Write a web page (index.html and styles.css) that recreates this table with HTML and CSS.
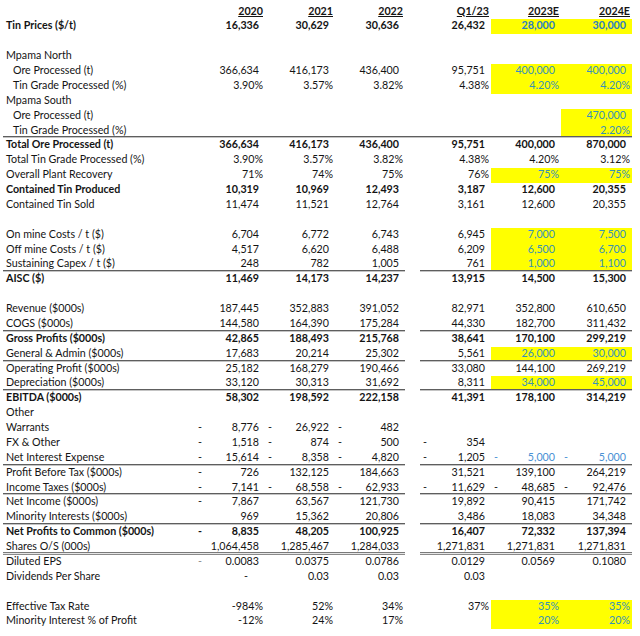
FILE: index.html
```html
<!DOCTYPE html>
<html>
<head>
<meta charset="utf-8">
<link rel="stylesheet" href="styles.css">
</head>
<body>
<div class="sheet">
  <div class="r hd"><div class="l"></div><div><u>2020</u></div><div><u>2021</u></div><div><u>2022</u></div><div class="s"></div><div><u>Q1/23</u></div><div><u>2023E</u></div><div><u>2024E</u></div></div>
  <div class="r b"><div class="l">Tin Prices ($/t)</div><div>16,336</div><div>30,629</div><div>30,636</div><div class="s"></div><div>26,432</div><div class="y in">28,000</div><div class="y in">30,000</div></div>
  <div class="r"><div class="l"></div><div></div><div></div><div></div><div class="s"></div><div></div><div></div><div></div></div>
  <div class="r"><div class="l">Mpama North</div><div></div><div></div><div></div><div class="s"></div><div></div><div></div><div></div></div>
  <div class="r"><div class="l i">Ore Processed (t)</div><div>366,634</div><div>416,173</div><div>436,400</div><div class="s"></div><div>95,751</div><div class="y in">400,000</div><div class="y in">400,000</div></div>
  <div class="r"><div class="l i">Tin Grade Processed (%)</div><div class="p">3.90%</div><div class="p">3.57%</div><div class="p">3.82%</div><div class="s"></div><div class="p">4.38%</div><div class="y in p">4.20%</div><div class="y in p">4.20%</div></div>
  <div class="r"><div class="l">Mpama South</div><div></div><div></div><div></div><div class="s"></div><div></div><div></div><div></div></div>
  <div class="r"><div class="l i">Ore Processed (t)</div><div></div><div></div><div></div><div class="s"></div><div></div><div></div><div class="y in">470,000</div></div>
  <div class="r bf"><div class="l i">Tin Grade Processed (%)</div><div></div><div></div><div></div><div class="s"></div><div></div><div></div><div class="y in p">2.20%</div></div>
  <div class="r b"><div class="l">Total Ore Processed (t)</div><div>366,634</div><div>416,173</div><div>436,400</div><div class="s"></div><div>95,751</div><div>400,000</div><div>870,000</div></div>
  <div class="r"><div class="l">Total Tin Grade Processed (%)</div><div class="p">3.90%</div><div class="p">3.57%</div><div class="p">3.82%</div><div class="s"></div><div class="p">4.38%</div><div class="p">4.20%</div><div class="p">3.12%</div></div>
  <div class="r"><div class="l">Overall Plant Recovery</div><div class="p">71%</div><div class="p">74%</div><div class="p">75%</div><div class="s"></div><div class="p">76%</div><div class="y in p">75%</div><div class="y in p">75%</div></div>
  <div class="r b"><div class="l">Contained Tin Produced</div><div>10,319</div><div>10,969</div><div>12,493</div><div class="s"></div><div>3,187</div><div>12,600</div><div>20,355</div></div>
  <div class="r"><div class="l">Contained Tin Sold</div><div>11,474</div><div>11,521</div><div>12,764</div><div class="s"></div><div>3,161</div><div>12,600</div><div>20,355</div></div>
  <div class="r"><div class="l"></div><div></div><div></div><div></div><div class="s"></div><div></div><div></div><div></div></div>
  <div class="r"><div class="l">On mine Costs / t ($)</div><div>6,704</div><div>6,772</div><div>6,743</div><div class="s"></div><div>6,945</div><div class="y in">7,000</div><div class="y in">7,500</div></div>
  <div class="r"><div class="l">Off mine Costs / t ($)</div><div>4,517</div><div>6,620</div><div>6,488</div><div class="s"></div><div>6,209</div><div class="y in">6,500</div><div class="y in">6,700</div></div>
  <div class="r bl"><div class="l">Sustaining Capex / t ($)</div><div>248</div><div>782</div><div>1,005</div><div class="s"></div><div>761</div><div class="y in">1,000</div><div class="y in">1,100</div></div>
  <div class="r b"><div class="l">AISC ($)</div><div>11,469</div><div>14,173</div><div>14,237</div><div class="s"></div><div>13,915</div><div>14,500</div><div>15,300</div></div>
  <div class="r"><div class="l"></div><div></div><div></div><div></div><div class="s"></div><div></div><div></div><div></div></div>
  <div class="r"><div class="l">Revenue ($000s)</div><div>187,445</div><div>352,883</div><div>391,052</div><div class="s"></div><div>82,971</div><div>352,800</div><div>610,650</div></div>
  <div class="r bl"><div class="l">COGS ($000s)</div><div>144,580</div><div>164,390</div><div>175,284</div><div class="s"></div><div>44,330</div><div>182,700</div><div>311,432</div></div>
  <div class="r b"><div class="l">Gross Profits ($000s)</div><div>42,865</div><div>188,493</div><div>215,768</div><div class="s"></div><div>38,641</div><div>170,100</div><div>299,219</div></div>
  <div class="r bl"><div class="l">General &amp; Admin ($000s)</div><div>17,683</div><div>20,214</div><div>25,302</div><div class="s"></div><div>5,561</div><div class="y in">26,000</div><div class="y in">30,000</div></div>
  <div class="r"><div class="l">Operating Profit ($000s)</div><div>25,182</div><div>168,279</div><div>190,466</div><div class="s"></div><div>33,080</div><div>144,100</div><div>269,219</div></div>
  <div class="r bl"><div class="l">Depreciation ($000s)</div><div>33,120</div><div>30,313</div><div>31,692</div><div class="s"></div><div>8,311</div><div class="y in">34,000</div><div class="y in">45,000</div></div>
  <div class="r b"><div class="l">EBITDA ($000s)</div><div>58,302</div><div>198,592</div><div>222,158</div><div class="s"></div><div>41,391</div><div>178,100</div><div>314,219</div></div>
  <div class="r"><div class="l">Other</div><div></div><div></div><div></div><div class="s"></div><div></div><div></div><div></div></div>
  <div class="r"><div class="l">Warrants</div><div class="ng"><span>-</span><span>8,776</span></div><div class="ng"><span>-</span><span>26,922</span></div><div class="ng"><span>-</span><span>482</span></div><div class="s"></div><div></div><div></div><div></div></div>
  <div class="r"><div class="l">FX &amp; Other</div><div class="ng"><span>-</span><span>1,518</span></div><div class="ng"><span>-</span><span>874</span></div><div class="ng"><span>-</span><span>500</span></div><div class="s"></div><div class="ng"><span>-</span><span>354</span></div><div></div><div></div></div>
  <div class="r bl"><div class="l">Net Interest Expense</div><div class="ng"><span>-</span><span>15,614</span></div><div class="ng"><span>-</span><span>8,358</span></div><div class="ng"><span>-</span><span>4,820</span></div><div class="s"></div><div class="ng"><span>-</span><span>1,205</span></div><div class="ng bi"><span>-</span><span>5,000</span></div><div class="ng bi"><span>-</span><span>5,000</span></div></div>
  <div class="r"><div class="l">Profit Before Tax ($000s)</div><div class="ng"><span>-</span><span>726</span></div><div>132,125</div><div>184,663</div><div class="s"></div><div>31,521</div><div>139,100</div><div>264,219</div></div>
  <div class="r bl"><div class="l">Income Taxes ($000s)</div><div class="ng"><span>-</span><span>7,141</span></div><div class="ng"><span>-</span><span>68,558</span></div><div class="ng"><span>-</span><span>62,933</span></div><div class="s"></div><div class="ng"><span>-</span><span>11,629</span></div><div class="ng"><span>-</span><span>48,685</span></div><div class="ng"><span>-</span><span>92,476</span></div></div>
  <div class="r"><div class="l">Net Income ($000s)</div><div class="ng"><span>-</span><span>7,867</span></div><div>63,567</div><div>121,730</div><div class="s"></div><div>19,892</div><div>90,415</div><div>171,742</div></div>
  <div class="r bl"><div class="l">Minority Interests ($000s)</div><div>969</div><div>15,362</div><div>20,806</div><div class="s"></div><div>3,486</div><div>18,083</div><div>34,348</div></div>
  <div class="r b"><div class="l">Net Profits to Common ($000s)</div><div class="ng"><span>-</span><span>8,835</span></div><div>48,205</div><div>100,925</div><div class="s"></div><div>16,407</div><div>72,332</div><div>137,394</div></div>
  <div class="r dbl"><div class="l">Shares O/S (000s)</div><div>1,064,458</div><div>1,285,467</div><div>1,284,033</div><div class="s"></div><div>1,271,831</div><div>1,271,831</div><div>1,271,831</div></div>
  <div class="r"><div class="l">Diluted EPS</div><div class="ng"><span class="lt">-</span><span>0.0083</span></div><div>0.0375</div><div>0.0786</div><div class="s"></div><div>0.0129</div><div>0.0569</div><div>0.1080</div></div>
  <div class="r"><div class="l">Dividends Per Share</div><div class="z">-</div><div>0.03</div><div>0.03</div><div class="s"></div><div>0.03</div><div></div><div></div></div>
  <div class="r"><div class="l"></div><div></div><div></div><div></div><div class="s"></div><div></div><div></div><div></div></div>
  <div class="r"><div class="l">Effective Tax Rate</div><div class="p">-984%</div><div class="p">52%</div><div class="p">34%</div><div class="s"></div><div class="p">37%</div><div class="y in p">35%</div><div class="y in p">35%</div></div>
  <div class="r"><div class="l">Minority Interest % of Profit</div><div class="p">-12%</div><div class="p">24%</div><div class="p">17%</div><div class="s"></div><div></div><div class="y in p">20%</div><div class="y in p">20%</div></div>
</div>
</body>
</html>
```
FILE: styles.css
```css
body {
  margin: 0;
  background: #ffffff;
  font-family: Lato, "Liberation Sans", sans-serif;
  font-size: 10.7px;
  color: #141414;
}

.sheet {
  padding: 4.6px 0 0 3px;
  width: 629px;
}

.r {
  display: grid;
  grid-template-columns: 192px 70px 70px 70px 15px 71px 70px 71px;
  height: 14.88px;
  line-height: 12.8px;
}

.r > div {
  white-space: nowrap;
  text-align: right;
  padding-right: 6px;
  box-sizing: border-box;
}

.r > .l {
  text-align: left;
  padding-left: 3px;
  padding-right: 0;
}

.r > .i {
  padding-left: 10px;
}

.r > .p,
.hd > div {
  padding-right: 2px;
}

.hd {
  font-weight: bold;
}

.b {
  font-weight: bold;
}

.r > .ng {
  display: flex;
  justify-content: space-between;
  padding-left: 3px;
}

.lt {
  color: #8a8a8a;
}

.r > .z {
  padding-right: 17px;
}

.y {
  background: #ffff00;
}

.in {
  color: #3791b8;
}

.b .in {
  color: #2f7fbf;
}

.bi {
  color: #4a90d4;
}

.bl > div:not(.s),
.bf > div {
  box-shadow: inset 0 -1px 0 #c4c4c4, inset 0 -2px 0 #5e5e5e;
}

.dbl > div:not(.s) {
  box-shadow: inset 0 -1px 0 #8a8a8a, inset 0 -2px 0 #e6e6e6, inset 0 -3px 0 #7a7a7a;
}
```
